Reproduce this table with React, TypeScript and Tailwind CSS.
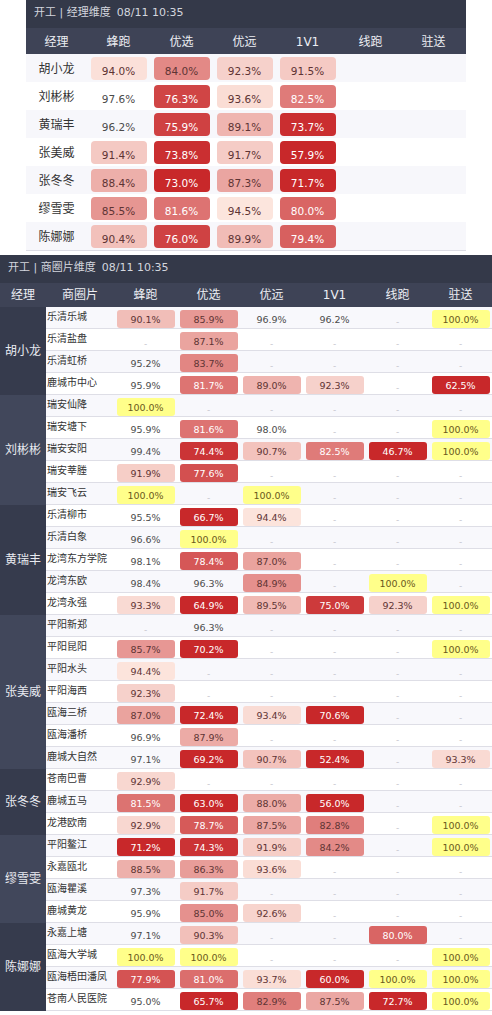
type Val = number | null;

const FONT = "font-['DejaVu_Sans','Noto_Sans_CJK_SC',sans-serif]";
const COLS = ["蜂跑", "优选", "优远", "1V1", "线跑", "驻送"];

const managers: { name: string; v: Val[] }[] = [
  { name: "胡小龙", v: [94.0, 84.0, 92.3, 91.5, null, null] },
  { name: "刘彬彬", v: [97.6, 76.3, 93.6, 82.5, null, null] },
  { name: "黄瑞丰", v: [96.2, 75.9, 89.1, 73.7, null, null] },
  { name: "张美威", v: [91.4, 73.8, 91.7, 57.9, null, null] },
  { name: "张冬冬", v: [88.4, 73.0, 87.3, 71.7, null, null] },
  { name: "缪雪雯", v: [85.5, 81.6, 94.5, 80.0, null, null] },
  { name: "陈娜娜", v: [90.4, 76.0, 89.9, 79.4, null, null] },
];

const groups: { name: string; rows: [string, Val[]][] }[] = [
  {
    name: "胡小龙",
    rows: [
      ["乐清乐城", [90.1, 85.9, 96.9, 96.2, null, 100]],
      ["乐清盐盘", [null, 87.1, null, null, null, null]],
      ["乐清虹桥", [95.2, 83.7, null, null, null, null]],
      ["鹿城市中心", [95.9, 81.7, 89.0, 92.3, null, 62.5]],
    ],
  },
  {
    name: "刘彬彬",
    rows: [
      ["瑞安仙降", [100, null, null, null, null, null]],
      ["瑞安塘下", [95.9, 81.6, 98.0, null, null, 100]],
      ["瑞安安阳", [99.4, 74.4, 90.7, 82.5, 46.7, 100]],
      ["瑞安莘塍", [91.9, 77.6, null, null, null, null]],
      ["瑞安飞云", [100, null, 100, null, null, null]],
    ],
  },
  {
    name: "黄瑞丰",
    rows: [
      ["乐清柳市", [95.5, 66.7, 94.4, null, null, null]],
      ["乐清白象", [96.6, 100, null, null, null, null]],
      ["龙湾东方学院", [98.1, 78.4, 87.0, null, null, null]],
      ["龙湾东欧", [98.4, 96.3, 84.9, null, 100, null]],
      ["龙湾永强", [93.3, 64.9, 89.5, 75.0, 92.3, 100]],
    ],
  },
  {
    name: "张美威",
    rows: [
      ["平阳新郑", [null, 96.3, null, null, null, null]],
      ["平阳昆阳", [85.7, 70.2, null, null, null, 100]],
      ["平阳水头", [94.4, null, null, null, null, null]],
      ["平阳海西", [92.3, null, null, null, null, null]],
      ["瓯海三桥", [87.0, 72.4, 93.4, 70.6, null, null]],
      ["瓯海潘桥", [96.9, 87.9, null, null, null, null]],
      ["鹿城大自然", [97.1, 69.2, 90.7, 52.4, null, 93.3]],
    ],
  },
  {
    name: "张冬冬",
    rows: [
      ["苍南巴曹", [92.9, null, null, null, null, null]],
      ["鹿城五马", [81.5, 63.0, 88.0, 56.0, null, null]],
      ["龙港欧南", [92.9, 78.7, 87.5, 82.8, null, 100]],
    ],
  },
  {
    name: "缪雪雯",
    rows: [
      ["平阳鳌江", [71.2, 74.3, 91.9, 84.2, null, 100]],
      ["永嘉瓯北", [88.5, 86.3, 93.6, null, null, null]],
      ["瓯海瞿溪", [97.3, 91.7, null, null, null, null]],
      ["鹿城黄龙", [95.9, 85.0, 92.6, null, null, null]],
    ],
  },
  {
    name: "陈娜娜",
    rows: [
      ["永嘉上塘", [97.1, 90.3, null, null, 80.0, null]],
      ["瓯海大学城", [100, 100, null, null, null, 100]],
      ["瓯海梧田潘凤", [77.9, 81.0, 93.7, 60.0, 100, 100]],
      ["苍南人民医院", [95.0, 65.7, 82.9, 87.5, 72.7, 100]],
    ],
  },
];

// heat colour: light pink at 95% -> deep red at 73%, 100% is yellow
function pillStyle(v: number) {
  if (v >= 100) return { backgroundColor: "#ffff8a", color: "#6b5a1c" };
  const t = Math.min(1, Math.max(0, (95 - v) / 22));
  const c = (a: number, b: number) => Math.round(a + (b - a) * t);
  return {
    backgroundColor: `rgb(${c(253, 200)},${c(233, 40)},${c(225, 42)})`,
    color: v <= 82.5 ? "#ffffff" : "#5e3434",
  };
}

const hasPill = (v: number) => v < 95 || v >= 100;

function TopCell({ v }: { v: Val }) {
  if (v === null) return <div className="w-[63px]" />;
  const txt = v.toFixed(1) + "%";
  if (!hasPill(v))
    return <div className="w-[63px] pt-[3px] text-center text-[10.5px] leading-[28px] text-[#4b4b4b]">{txt}</div>;
  return (
    <div className="flex w-[63px] justify-center pt-[3px]">
      <div style={pillStyle(v)} className="h-[23px] w-[56px] rounded-[4px] text-center text-[10.5px] leading-[28px]">
        {txt}
      </div>
    </div>
  );
}

function Cell({ v }: { v: Val }) {
  if (v === null)
    return <div className="w-[63px] pt-[5px] text-center text-[9px] leading-[20px] text-[#c6c6ce]">-</div>;
  const txt = v.toFixed(1) + "%";
  if (!hasPill(v))
    return <div className="w-[63px] pt-[3px] text-center text-[9.5px] leading-[20px] text-[#4b4b4b]">{txt}</div>;
  return (
    <div className="flex w-[63px] justify-center pt-[3px]">
      <div style={pillStyle(v)} className="h-[18px] w-[58px] rounded-[3px] text-center text-[9.5px] leading-[20px]">
        {txt}
      </div>
    </div>
  );
}

export default function App() {
  let idx = 0;
  return (
    <div className={`w-[492px] bg-white ${FONT}`}>
      {/* 经理维度 */}
      <div className="mx-[26px] w-[440px]">
        <div className="h-[28px] bg-[#343949] pl-[8px] text-[11px] leading-[25px] text-[#d3d6de]">
          开工 | 经理维度<span className="ml-[6px]">08/11 10:35</span>
        </div>
        <div className="flex h-[26px] bg-[#3e4356] pt-[1px] text-[12px] leading-[26px] text-[#eceef3]">
          <div className="w-[61px] text-center">经理</div>
          {COLS.map((c) => (
            <div key={c} className="w-[63px] text-center">
              {c}
            </div>
          ))}
        </div>
        <div className="border-b border-[#dcdce4]">
          {managers.map((m, i) => (
            <div key={m.name} className={`flex h-[28px] ${i % 2 === 0 ? "bg-[#f7f7fb]" : "bg-white"}`}>
              <div className="w-[61px] pt-[1px] text-center text-[12px] leading-[28px] text-[#333]">{m.name}</div>
              {m.v.map((v, j) => (
                <TopCell key={j} v={v} />
              ))}
            </div>
          ))}
        </div>
      </div>

      {/* 商圈片维度 */}
      <div className="mt-[4px] w-full">
        <div className="h-[28px] bg-[#343949] pl-[8px] text-[11px] leading-[25px] text-[#d3d6de]">
          开工 | 商圈片维度<span className="ml-[6px]">08/11 10:35</span>
        </div>
        <div className="flex h-[24px] bg-[#3e4356] text-[12px] leading-[24px] text-[#eceef3]">
          <div className="w-[46px] text-center">经理</div>
          <div className="w-[68px] text-center">商圈片</div>
          {COLS.map((c) => (
            <div key={c} className="w-[63px] text-center">
              {c}
            </div>
          ))}
        </div>
        {groups.map((g, gi) => (
          <div key={g.name} className="flex">
            <div
              className={`flex w-[46px] items-center justify-center text-[12px] text-[#e8eaf0] ${
                gi % 2 === 0 ? "bg-[#363b4d]" : "bg-[#41475b]"
              }`}
            >
              {g.name}
            </div>
            <div className="flex-1">
              {g.rows.map(([name, vals]) => {
                const odd = idx++ % 2 === 1;
                return (
                  <div
                    key={name}
                    className={`flex h-[22px] border-b border-[#dedee6] ${odd ? "bg-white" : "bg-[#f8f8fc]"}`}
                  >
                    <div className="w-[68px] whitespace-nowrap pl-[1px] pt-[2px] text-[10px] leading-[15px] text-[#333]">
                      {name}
                    </div>
                    {vals.map((v, j) => (
                      <Cell key={j} v={v} />
                    ))}
                  </div>
                );
              })}
            </div>
          </div>
        ))}
      </div>
    </div>
  );
}
